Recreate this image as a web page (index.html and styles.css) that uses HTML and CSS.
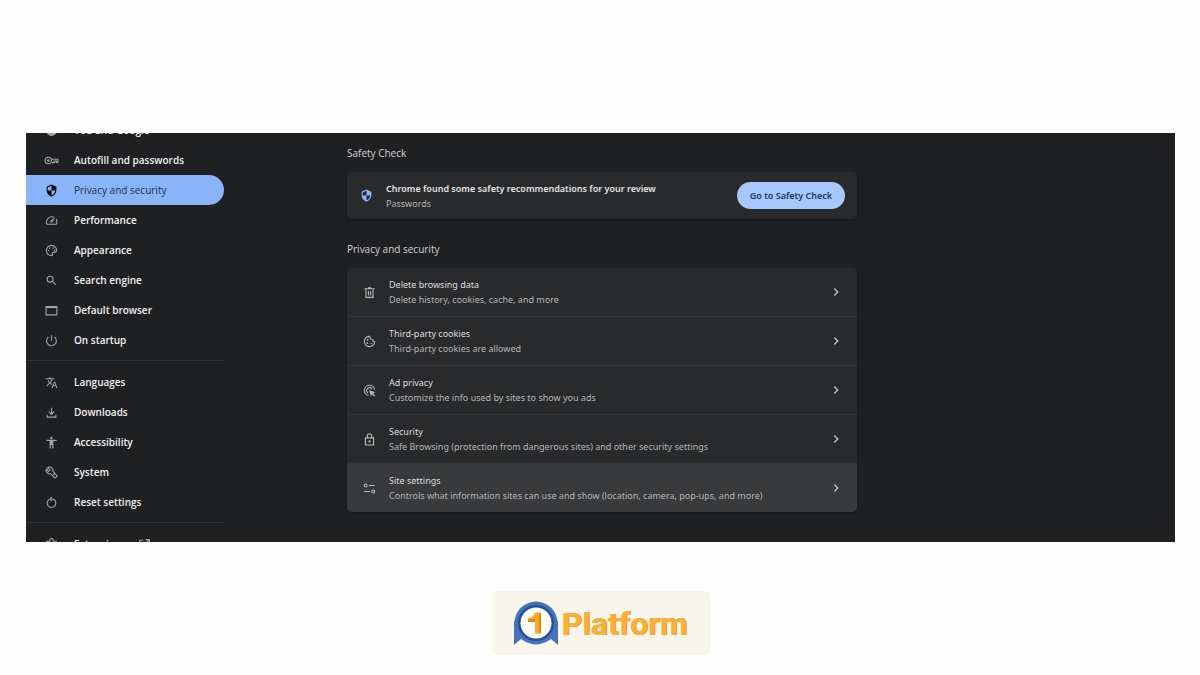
FILE: index.html
```html
<!DOCTYPE html>
<html lang="en">
<head>
<meta charset="utf-8">
<meta name="viewport" content="width=device-width, initial-scale=1">
<title>Settings - Privacy and security</title>
<link rel="stylesheet" href="styles.css">
</head>
<body>
<div class="window">
  <nav class="sidebar" aria-label="Settings">
    <a class="item" href="#"><svg class="icon" viewBox="0 0 24 24"><circle cx="12" cy="12" r="10"/><path class="cut" d="M12 7h5M12 12h5"/></svg>You and Google</a>
    <a class="item" href="#"><svg class="icon wide" viewBox="0 0 28 24"><g class="line"><circle cx="8" cy="12" r="6"/><path d="M14 9.500h12v6h-3v-2.500h-4v3h-4"/></g><circle cx="8" cy="12" r="2.500"/></svg>Autofill and passwords</a>
    <a class="item active" href="#" aria-current="page"><svg class="icon" viewBox="0 0 24 24"><path d="M12 1 3 5v6c0 5.550 3.840 10.740 9 12 5.160-1.260 9-6.450 9-12V5l-9-4zm0 10.990h7c-.53 4.120-3.280 7.790-7 8.940V12H5V6.300l7-3.110v8.800z"/></svg>Privacy and security</a>
    <a class="item" href="#"><svg class="icon" viewBox="0 0 24 24"><path class="line" d="M17 6.200A10 10 0 0 0 3.400 19h17.200A10 10 0 0 0 20.500 9"/><path d="m19 6-8.500 6.200a2 2 0 1 0 2.800 2.800z"/></svg>Performance</a>
    <a class="item" href="#"><svg class="icon" viewBox="0 0 24 24"><path class="line" d="M12 2.500a9.500 9.500 0 0 0 0 19c2 0 2.500-1.500 1.700-2.800-1-2 .2-3.700 2.300-3.700h2.500c2 0 3-1.500 3-3.500C21.500 6.500 17.200 2.500 12 2.500z"/><circle cx="6.500" cy="12" r="1.500"/><circle cx="9" cy="7.500" r="1.500"/><circle cx="15" cy="7.500" r="1.500"/><circle cx="18" cy="11.500" r="1.500"/></svg>Appearance</a>
    <a class="item" href="#"><svg class="icon" viewBox="0 0 24 24"><path d="M15.500 14h-.79l-.28-.27A6.470 6.470 0 0 0 16 9.500 6.500 6.500 0 1 0 9.500 16c1.610 0 3.090-.59 4.230-1.570l.27.280v.79l5 4.990L20.490 19l-4.990-5zm-6 0a4.500 4.500 0 1 1 0-9 4.500 4.500 0 0 1 0 9z"/></svg>Search engine</a>
    <a class="item" href="#"><svg class="icon" viewBox="0 0 24 24"><path class="line" d="M2 4.500h20v15.500H2z"/><path d="M2 4h20v3.500H2z"/></svg>Default browser</a>
    <a class="item" href="#"><svg class="icon" viewBox="0 0 24 24"><path class="line" d="M12 2.500v10M6.500 5.500a9 9 0 1 0 11 0"/></svg>On startup</a>
    <hr class="divider">
    <a class="item" href="#"><svg class="icon wide" viewBox="0 0 24 24"><path d="m12.870 15.070-2.540-2.510.03-.03A17.520 17.520 0 0 0 14.070 6H17V4h-7V2H8v2H1v1.990h11.170C11.500 7.920 10.440 9.750 9 11.350 8.070 10.320 7.300 9.190 6.690 8h-2c.73 1.630 1.730 3.170 2.980 4.560l-5.090 5.020L4 19l5-5 3.110 3.110.76-2.040zM18.500 10h-2L12 22h2l1.120-3h4.750L21 22h2l-4.500-12zm-2.620 7 1.620-4.330L19.120 17h-3.240z"/></svg>Languages</a>
    <a class="item" href="#"><svg class="icon" viewBox="0 0 24 24"><path class="line" d="M12 3v12M7 10.500l5 5 5-5M4 16v4.500h16V16"/></svg>Downloads</a>
    <a class="item" href="#"><svg class="icon" viewBox="0 0 24 24"><path d="M12 1.500a2.300 2.300 0 1 1 0 4.600 2.300 2.300 0 0 1 0-4.600zM21.500 9H15.500v14h-2.300v-6.500h-2.400V23H8.500V9h-6V6.800h19z"/></svg>Accessibility</a>
    <a class="item" href="#"><svg class="icon" viewBox="0 0 24 24"><path class="line" d="M3.500 4.800a6 6 0 0 1 9-1.800 6 6 0 0 1 1.700 6.700l7.600 7.600c.7.700.7 1.300 0 2l-2.300 2.300c-.7.700-1.300.7-2 0l-7.600-7.600a6 6 0 0 1-7.400-8l4 4 3-3-3.500-3.500M15 17l4-4"/></svg>System</a>
    <a class="item" href="#"><svg class="icon" viewBox="0 0 24 24"><path class="line" d="M7.500 6.500a8 8 0 1 0 9 0L13 5.500H9.500"/><path class="line" d="m12.500 2-3.500 3.500 3.500 3.500"/></svg>Reset settings</a>
    <hr class="divider">
    <a class="item" href="#"><svg class="icon" viewBox="0 0 24 24"><path class="line" d="M3 6h6V4a3 3 0 0 1 6 0v2h6v15H3z"/></svg>Extensions<svg class="icon external" viewBox="0 0 24 24"><path class="line" d="M10 4H3v17h17v-7M14 3h7v7M21 3 10 14"/></svg></a>
  </nav>

  <main class="content">
    <h2 class="heading">Safety Check</h2>
    <section class="card safety">
      <svg class="icon shield" viewBox="0 0 24 24"><path d="M12 1 3 5v6c0 5.550 3.840 10.740 9 12 5.160-1.260 9-6.450 9-12V5l-9-4zm0 10.990h7c-.53 4.120-3.280 7.790-7 8.940V12H5V6.300l7-3.110v8.800z"/></svg>
      <div class="text">
        <strong class="lead">Chrome found some safety recommendations for your review</strong>
        <span class="sub">Passwords</span>
      </div>
      <button class="action" type="button">Go to Safety Check</button>
    </section>

    <h2 class="heading">Privacy and security</h2>
    <section class="card">
      <a class="row" href="#">
        <svg class="icon" viewBox="0 0 24 24"><path class="line" d="M5.500 6v15h13V6M2.500 5h19M9 3.500h6M10 9v8.500M14 9v8.500"/></svg>
        <span class="text"><span class="title">Delete browsing data</span><span class="sub">Delete history, cookies, cache, and more</span></span>
        <svg class="icon chevron" viewBox="0 0 24 24"><path class="line" d="m8.500 5 7 7-7 7"/></svg>
      </a>
      <a class="row" href="#">
        <svg class="icon" viewBox="0 0 24 24"><path class="line" d="M12.500 2.500a9.500 9.500 0 1 0 9 9.500c-2 .2-3.500-1-3.500-3-2.800.3-5.500-2.500-5.500-6.500z"/><circle cx="8.500" cy="9" r="1.600"/><circle cx="8" cy="15" r="1.600"/><circle cx="15" cy="15.500" r="1.400"/></svg>
        <span class="text"><span class="title">Third-party cookies</span><span class="sub">Third-party cookies are allowed</span></span>
        <svg class="icon chevron" viewBox="0 0 24 24"><path class="line" d="m8.500 5 7 7-7 7"/></svg>
      </a>
      <a class="row" href="#">
        <svg class="icon" viewBox="0 0 24 24"><path class="line" d="M10.500 21.300A9.500 9.500 0 1 1 21.300 10.500M9.300 16.700a5.400 5.400 0 1 1 7.400-7.400"/><path d="m11 11 12 4-4.500 2 4.500 4.500-1.700 1.700-4.500-4.500-2 4.300z"/></svg>
        <span class="text"><span class="title">Ad privacy</span><span class="sub">Customize the info used by sites to show you ads</span></span>
        <svg class="icon chevron" viewBox="0 0 24 24"><path class="line" d="m8.500 5 7 7-7 7"/></svg>
      </a>
      <a class="row" href="#">
        <svg class="icon" viewBox="0 0 24 24"><path class="line" d="M4.500 9h15v13h-15zM8 9V5.500a4 4 0 0 1 8 0V9"/><circle cx="12" cy="15.500" r="2"/></svg>
        <span class="text"><span class="title">Security</span><span class="sub">Safe Browsing (protection from dangerous sites) and other security settings</span></span>
        <svg class="icon chevron" viewBox="0 0 24 24"><path class="line" d="m8.500 5 7 7-7 7"/></svg>
      </a>
      <a class="row hovered" href="#">
        <svg class="icon" viewBox="0 0 24 24"><g class="line"><circle cx="5" cy="6.500" r="2.700"/><path d="M11 6.500h10.500M2 17.500h11"/><circle cx="19" cy="17.500" r="2.700"/></g></svg>
        <span class="text"><span class="title">Site settings</span><span class="sub">Controls what information sites can use and show (location, camera, pop-ups, and more)</span></span>
        <svg class="icon chevron" viewBox="0 0 24 24"><path class="line" d="m8.500 5 7 7-7 7"/></svg>
      </a>
    </section>
  </main>
</div>

<footer class="brand">
  <svg class="badge" viewBox="0 0 44 44" aria-hidden="true">
    <path fill="#4673b8" d="M0 20h44v24l-7-6-5 2H12l-5-2-7 6z"/>
    <circle cx="22" cy="22" r="21.500" fill="#4673b8"/>
    <circle cx="22" cy="22" r="18" fill="#2450a0"/>
    <circle cx="22" cy="22" r="15.500" fill="#fffdf8"/>
    <path fill="#f9a928" d="M21 11.500h6v21h-6V21h-7v-4c4 0 6-2 7-5.500z"/>
    <path fill="#d9861b" d="m25 13 2-1.500v21L25 31zM14 19l3-1h4v3h-7z"/>
  </svg>
  <span class="name">Platform</span>
</footer>
</body>
</html>
```
FILE: styles.css
```css
* {
  box-sizing: border-box;
}

body {
  display: flex;
  flex-direction: column;
  gap: 49px;
  min-height: 100vh;
  margin: 0;
  padding: 133px 25px 20px 26px;
  background: #fefefe;
  font-family: "Open Sans", "Noto Sans", sans-serif;
  font-size: 10px;
  line-height: 15px;
}

a {
  color: inherit;
  text-decoration: none;
}

.window {
  display: grid;
  grid-template-columns: 198px minmax(0, 1fr) 195px;
  max-height: 409px;
  overflow: hidden;
  background: #1f2022;
  color: #e3e3e3;
}

.icon {
  flex: none;
  width: 13px;
  height: 13px;
  fill: currentColor;
}

.line {
  fill: none;
  stroke: currentColor;
  stroke-width: 2;
}

.cut {
  stroke: #1f2022;
  stroke-width: 2;
}

.sidebar {
  margin-top: -18px;
}

.item {
  display: flex;
  align-items: center;
  gap: 16px;
  height: 30px;
  padding-left: 19px;
  color: #f1f1f1;
  font-weight: 600;
}

.item .icon {
  color: #a3a4a6;
}

.item .wide {
  width: 15px;
  margin: 0 -1px;
}

.item .external {
  margin-left: -4px;
}

.item.active {
  border-radius: 0 15px 15px 0;
  background: #8ab4f8;
  color: #22324f;
  font-weight: 500;
}

.item.active .icon {
  color: #08090b;
}

.divider {
  height: 1px;
  margin: 5px 0 6px;
  border: 0;
  background: #323335;
}

.content {
  width: 100%;
  max-width: 510px;
  margin: 0 auto;
}

.heading {
  margin: 12px 0 11px;
  color: #d3d3d4;
  font-size: 10px;
  font-weight: 400;
  line-height: 16px;
}

.card {
  overflow: hidden;
  border-radius: 5px;
  background: #292a2b;
  box-shadow: 0 1px 2px #17181a;
  font-family: "Noto Sans", "Open Sans", sans-serif;
  font-size: 9px;
}

.safety {
  display: flex;
  align-items: center;
  gap: 13px;
  height: 47px;
  margin-bottom: 22px;
  padding: 0 12px 0 13px;
}

.shield {
  color: #8ab4f8;
}

.text {
  display: flex;
  flex: 1;
  flex-direction: column;
  min-width: 0;
}

.lead {
  font-weight: 600;
}

.title {
  color: #dededf;
}

.sub {
  color: #b4b5b6;
}

.action {
  height: 27px;
  padding: 0 13px;
  border: 0;
  border-radius: 14px;
  background: #a8c7fa;
  color: #15386f;
  font: inherit;
  font-weight: 600;
}

.row {
  display: flex;
  align-items: center;
  gap: 13px;
  min-height: 48px;
  padding: 0 15px 0 16px;
  color: #b8b9ba;
}

.row + .row {
  min-height: 49px;
  border-top: 1px solid #353637;
}

.row.hovered {
  background: #393a3b;
}

.chevron {
  width: 12px;
  height: 12px;
}

.chevron .line {
  stroke-width: 3;
}

.brand {
  display: flex;
  align-items: center;
  align-self: center;
  gap: 4px;
  padding: 10px 22px;
  border-radius: 5px;
  background: #f8f5ec;
}

.badge {
  width: 44px;
  height: 44px;
}

.name {
  padding-top: 2px;
  color: #fbb034;
  font-family: Roboto, sans-serif;
  font-size: 32px;
  font-weight: 700;
  line-height: 42px;
  text-shadow: 1px 0 #e3932a;
}
```
